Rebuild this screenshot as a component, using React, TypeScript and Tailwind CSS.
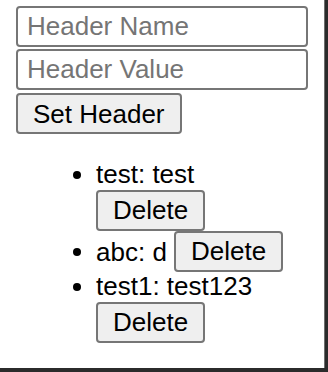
import { useState } from 'react';

interface HeaderEntry {
  name: string;
  value: string;
}

const initialHeaders: HeaderEntry[] = [
  { name: 'test', value: 'test' },
  { name: 'abc', value: 'd' },
  { name: 'test1', value: 'test123' },
];

const fieldClass =
  'block w-full h-[41px] px-[9px] text-[26px] leading-[1.15] text-black bg-white border-2 border-[#767676] rounded-[4px] outline-none placeholder:text-[#757575]';

const buttonClass =
  'h-[41px] px-[15px] text-[26px] leading-none text-black bg-[#efefef] border-2 border-[#767676] rounded-[4px] align-baseline';

export default function App() {
  const [headers, setHeaders] = useState<HeaderEntry[]>(initialHeaders);
  const [name, setName] = useState('');
  const [value, setValue] = useState('');

  const addHeader = () => {
    if (!name) return;
    setHeaders((h) => [...h, { name, value }]);
    setName('');
    setValue('');
  };

  return (
    <div className="w-[328px] h-[372px] bg-[#2b2b2b] font-['Liberation_Sans',Helvetica,Arial,sans-serif]">
      <div className="w-[325px] h-[368px] bg-white border-r border-[#6e6e6e] px-[16px] pt-[6px]">
        {/* Form */}
        <input
          className={fieldClass}
          placeholder="Header Name"
          value={name}
          onChange={(e) => setName(e.target.value)}
        />
        <input
          className={`${fieldClass} mt-[2px]`}
          placeholder="Header Value"
          value={value}
          onChange={(e) => setValue(e.target.value)}
        />
        <button className={`${buttonClass} mt-[3px]`} onClick={addHeader}>
          Set Header
        </button>

        {/* Header list */}
        <ul className="list-disc mt-[26px] pl-[80px] text-[26px] leading-[1.15] text-black">
          {headers.map((h, i) => (
            <li key={i}>
              {h.name}: {h.value}{' '}
              <button
                className={buttonClass}
                onClick={() => setHeaders((list) => list.filter((_, j) => j !== i))}
              >
                Delete
              </button>
            </li>
          ))}
        </ul>
      </div>
    </div>
  );
}
